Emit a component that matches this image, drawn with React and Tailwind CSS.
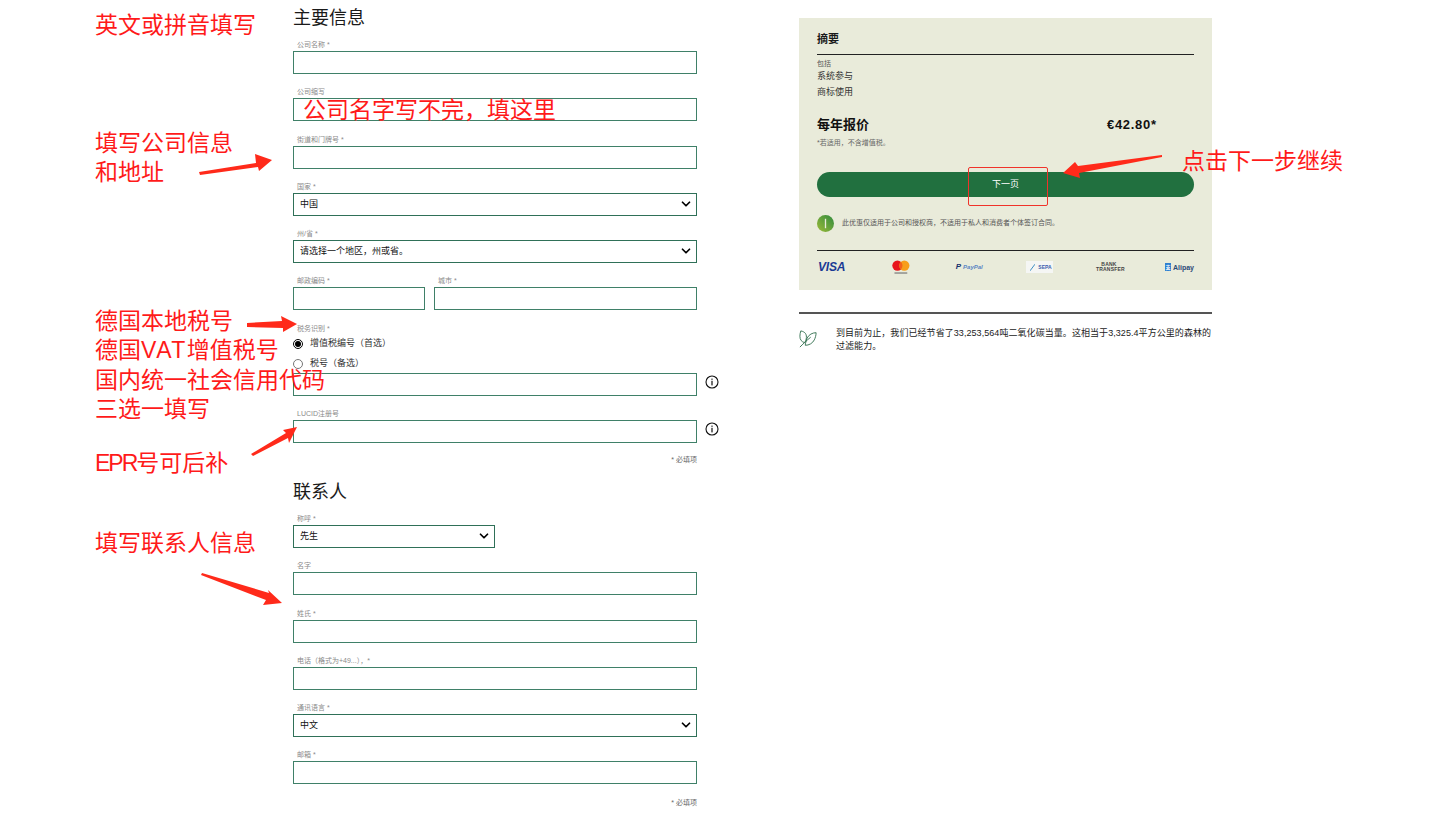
import React from "react";
import { ChevronDown } from "lucide-react";

const Label = ({ children }) => (
  <label className="block h-[10px] mb-px pl-[4px] text-[7px] leading-[10px] text-[#8a8a8a] whitespace-nowrap">{children}</label>
);

const Field = ({ label, className = "", info }) => (
  <div className={`mb-[13.25px] ${className}`}>
    <Label>{label}</Label>
    <div className="relative">
      <input type="text" className="block w-full h-[23px] border border-[#3f8068] bg-white outline-none" />
      {info && <InfoIcon />}
    </div>
  </div>
);

const SelectField = ({ label, value, className = "" }) => (
  <div className={`mb-[13.25px] ${className}`}>
    <Label>{label}</Label>
    <div className="relative">
      <select defaultValue={value} className="block w-full h-[23px] border border-[#2f7058] bg-white pl-[6px] text-[9px] text-[#111] appearance-none outline-none">
        <option value={value}>{value}</option>
      </select>
      <ChevronDown size={14} strokeWidth={3} className="absolute right-[4px] top-[4px] text-black pointer-events-none" />
    </div>
  </div>
);

const InfoIcon = () => (
  <svg viewBox="0 0 14 14" className="absolute left-[calc(100%+8px)] top-[2px] w-[14px] h-[14px]">
    <circle cx="7" cy="7" r="6" fill="none" stroke="#111" strokeWidth="1.1" />
    <rect x="6.4" y="5.8" width="1.2" height="4.6" fill="#111" />
    <rect x="6.4" y="3.6" width="1.2" height="1.2" fill="#111" />
  </svg>
);

const Radio = ({ label, checked }) => (
  <label className="flex items-center h-[20px] pt-[2px] text-[9px] text-[#333]">
    <input type="radio" name="tax" defaultChecked={checked} className="w-[10px] h-[10px] m-0 mr-[7px] accent-black" />
    {label}
  </label>
);

const Required = () => (
  <p className="h-[10px] text-right text-[7px] leading-[10px] text-[#666]">* 必填项</p>
);

// red notes and arrows drawn on top of the screenshot
const Note = ({ className, children }) => (
  <div className={`absolute text-[23px] leading-[29px] text-[#ff1a1a] whitespace-nowrap ${className}`}>{children}</div>
);

const arrows = [
  "199,172 256,163 255,154 272,160 259,171 258,167 200,175",
  "247,323 282,321 281,316 297,324 283,332 283,328 247,327",
  "251,454 286,433 283,430 297,427 289,443 288,438 253,456",
  "201,575 202,573 269,593 268,590 282,603 263,605 266,600",
  "1162,155 1078,166 1075,162 1063,173 1080,178 1079,173 1162,157",
];

const Overlay = () => (
  <>
    <Note className="left-[95px] top-[11px]">英文或拼音填写</Note>
    <Note className="left-[303px] top-[96px]">公司名字写不完，填这里</Note>
    <Note className="left-[95px] top-[129px]">填写公司信息<br />和地址</Note>
    <Note className="left-[95px] top-[307px] !leading-[29.3px]">
      德国本地税号<br />德国<span className="tracking-[1.5px]">VAT</span>增值税号<br />国内统一社会信用代码<br />三选一填写
    </Note>
    <Note className="left-[95px] top-[449px]"><span className="tracking-[-2px]">EPR</span>号可后补</Note>
    <Note className="left-[95px] top-[529px]">填写联系人信息</Note>
    <Note className="left-[1182px] top-[147px]">点击下一步继续</Note>
    <div className="absolute left-[968px] top-[167px] w-[80px] h-[39px] border border-[#f0332a] rounded-[2px]" />
    <svg className="absolute left-0 top-0 w-[1435px] h-[813px] pointer-events-none" viewBox="0 0 1435 813">
      {arrows.map((p) => <polygon key={p} points={p} fill="#ff2a1a" />)}
    </svg>
  </>
);

const PaymentLogos = () => (
  <div className="flex items-center h-[32px] pl-px">
    <span className="w-[27px] text-[12px] leading-none font-bold italic text-[#1a3a94] tracking-[-0.2px]">VISA</span>
    <svg viewBox="0 0 18 15" className="w-[18px] h-[15px] ml-[47px]">
      <circle cx="5.5" cy="5.5" r="5.2" fill="#e8141c" />
      <circle cx="12.5" cy="5.5" r="5.2" fill="#f79e1b" />
      <path d="M9 1.7a5.2 5.2 0 0 1 0 7.6a5.2 5.2 0 0 1 0-7.6z" fill="#f2601c" />
      <rect x="2.5" y="12.5" width="13" height="1.2" fill="#777" />
    </svg>
    <span className="flex items-center gap-[2px] w-[29px] ml-[46px] text-[6px] leading-none font-bold italic text-[#5a86c4]">
      <span className="text-[8px] text-[#17306e]">P</span>PayPal
    </span>
    <span className="flex items-center gap-[3px] w-[27px] h-[12px] ml-[42px] pl-[4px] bg-[#f5f6f4] text-[5px] font-bold leading-none text-[#3a5fb0]">
      <svg viewBox="0 0 6 8" className="w-[5px] h-[7px]"><path d="M0 8 L6 0" stroke="#3f8fc4" strokeWidth="1.2" /></svg>
      SEPA
    </span>
    <span className="w-[26px] ml-[43px] text-[5px] font-bold leading-[5.5px] text-[#444] text-center tracking-[0.2px]">BANK TRANSFER</span>
    <span className="flex items-center gap-[2px] ml-[43px] text-[7px] font-bold leading-none text-[#2c4a78]">
      <span className="flex items-center justify-center w-[6px] h-[8px] bg-[#2f7fd0] text-[5px] text-white">支</span>Alipay
    </span>
  </div>
);

export default function App() {
  return (
    <div className="relative flex items-start w-[1435px] h-[813px] overflow-hidden bg-white font-['Liberation_Sans','Noto_Sans_CJK_SC',sans-serif]">
      {/* form column */}
      <main className="w-[404px] ml-[293px] pt-[5px]">
        <h2 className="h-[26px] mb-[9px] text-[18px] leading-[26px] text-[#1a1a1a]">主要信息</h2>
        <Field label="公司名称 *" />
        <Field label="公司缩写" />
        <Field label="街道和门牌号 *" />
        <SelectField label="国家 *" value="中国" />
        <SelectField label="州/省 *" value="请选择一个地区，州或省。" />
        <div className="flex gap-[9px]">
          <Field label="邮政编码 *" className="w-[132px]" />
          <Field label="城市 *" className="flex-1" />
        </div>
        <Label>税务识别 *</Label>
        <div className="-mt-[1.5px]">
          <Radio label="增值税编号（首选）" checked />
          <Radio label="税号（备选）" />
        </div>
        <div className="relative mb-[13px]">
          <input type="text" className="block w-full h-[23px] border border-[#3f8068] bg-white outline-none" />
          <InfoIcon />
        </div>
        <Field label="LUCID注册号" info className="!mb-[12px]" />
        <Required />
        <h2 className="h-[26px] mt-[14px] mb-[9px] text-[18px] leading-[26px] text-[#1a1a1a]">联系人</h2>
        <SelectField label="称呼 *" value="先生" className="w-[202px]" />
        <Field label="名字" />
        <Field label="姓氏 *" />
        <Field label="电话（格式为+49...），*" />
        <SelectField label="通讯语言 *" value="中文" />
        <Field label="邮箱 *" className="!mb-[14px]" />
        <Required />
      </main>

      {/* summary column */}
      <aside className="w-[413px] ml-[102px] mt-[18px]">
        <div className="h-[272px] px-[18px] bg-[#e9ebda]">
          <h3 className="h-[37px] pt-[14px] border-b border-[#222] text-[11px] leading-[14px] font-bold text-[#1a1a1a]">摘要</h3>
          <p className="mt-[4px] text-[7px] leading-[9px] text-[#555]">包括</p>
          <p className="mt-[2px] text-[9px] leading-[12px] text-[#333]">系统参与</p>
          <p className="mt-[4px] text-[9px] leading-[12px] text-[#333]">商标使用</p>
          <div className="flex items-center h-[16px] mt-[19px] text-[13px] font-bold text-[#111]">
            <span className="w-[290px]">每年报价</span>
            <span className="tracking-[0.7px]">€42.80*</span>
          </div>
          <p className="mt-[5px] text-[7px] leading-[10px] text-[#666]">*若适用，不含增值税。</p>
          <button className="block w-full h-[25px] mt-[24px] rounded-full bg-[#21703f] text-[9px] text-white">下一页</button>
          <div className="flex items-center gap-[8px] h-[18px] mt-[17px]">
            <svg viewBox="0 0 18 18" className="w-[17px] h-[17px]">
              <defs>
                <linearGradient id="badge" x1="0" y1="1" x2="1" y2="0">
                  <stop offset="0" stopColor="#9dbb38" />
                  <stop offset="1" stopColor="#2f8a3e" />
                </linearGradient>
              </defs>
              <circle cx="9" cy="9" r="9" fill="url(#badge)" />
              <rect x="8.3" y="4" width="1.4" height="10" fill="#e9ebda" />
            </svg>
            <p className="text-[7px] leading-[10px] text-[#555]">此优惠仅适用于公司和授权商，不适用于私人和消费者个体签订合同。</p>
          </div>
          <div className="mt-[18px] border-t border-[#222]">
            <PaymentLogos />
          </div>
        </div>
        <div className="flex mt-[22px] pt-[13px] border-t-2 border-[#555]">
          <svg viewBox="0 0 20 20" fill="none" stroke="#2f6d4c" strokeWidth="1" className="w-[18px] h-[20px] mt-[2px] mr-[19px] shrink-0">
            <path d="M2 1c5 1 7 4 6 9c-.4 2-1 3-2 4c-3-1-5-3-5-7c0-2 .4-4 1-6z" />
            <path d="M19 3c-4 0-8 2-10 6c-1 3-2 6-2 8c4 0 8-2 10-6c1-2 2-5 2-8z" />
            <path d="M1 19c3-3 7-7 12-11" />
          </svg>
          <p className="text-[9px] leading-[13px] tracking-[0.06px] text-[#222]">到目前为止，我们已经节省了33,253,564吨二氧化碳当量。这相当于3,325.4平方公里的森林的过滤能力。</p>
        </div>
      </aside>

      <Overlay />
    </div>
  );
}
